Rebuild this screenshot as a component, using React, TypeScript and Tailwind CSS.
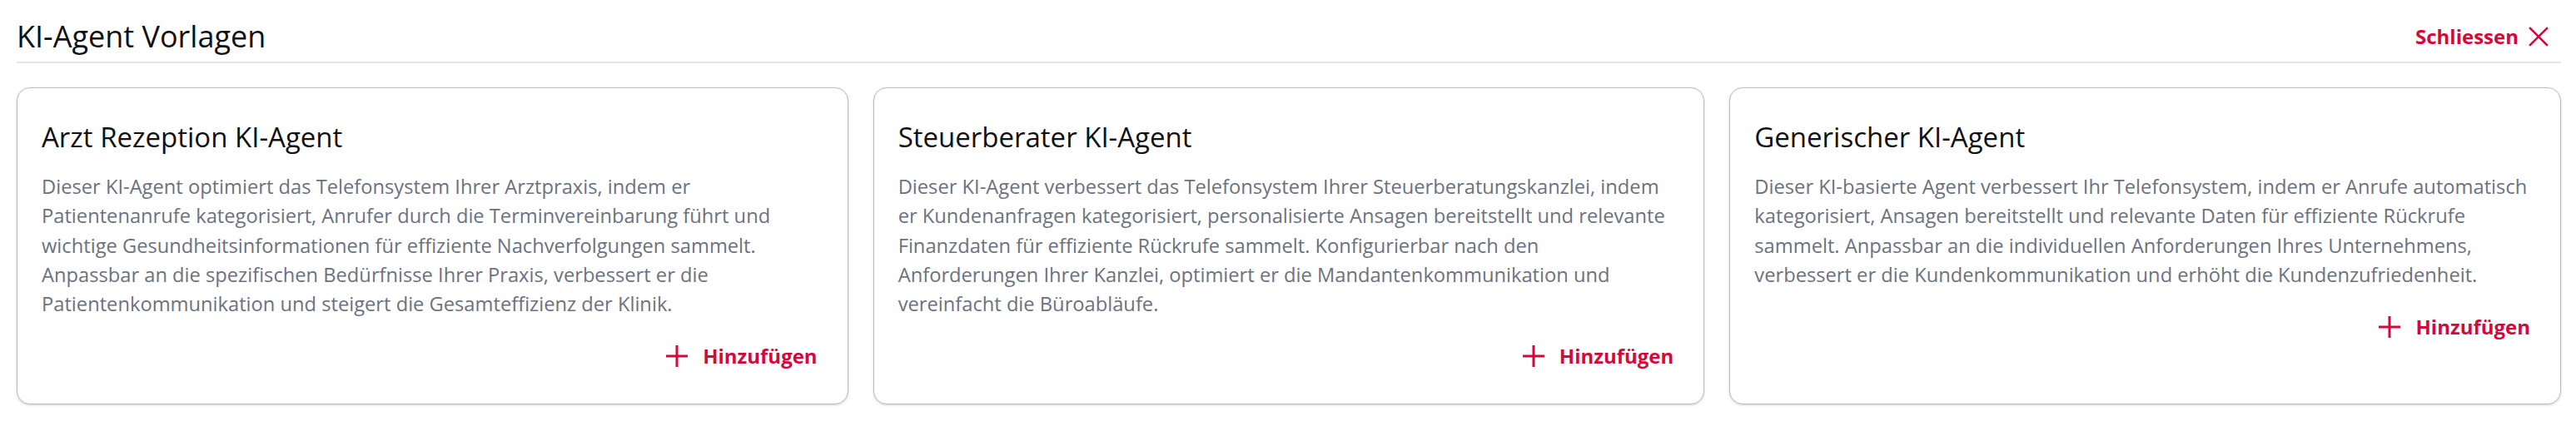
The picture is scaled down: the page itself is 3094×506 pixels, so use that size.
import React from 'react';

interface Template {
  title: string;
  description: string;
}

const templates: Template[] = [
  {
    title: 'Arzt Rezeption KI-Agent',
    description:
      'Dieser KI-Agent optimiert das Telefonsystem Ihrer Arztpraxis, indem er Patientenanrufe kategorisiert, Anrufer durch die Terminvereinbarung führt und wichtige Gesundheitsinformationen für effiziente Nachverfolgungen sammelt. Anpassbar an die spezifischen Bedürfnisse Ihrer Praxis, verbessert er die Patientenkommunikation und steigert die Gesamteffizienz der Klinik.',
  },
  {
    title: 'Steuerberater KI-Agent',
    description:
      'Dieser KI-Agent verbessert das Telefonsystem Ihrer Steuerberatungskanzlei, indem er Kundenanfragen kategorisiert, personalisierte Ansagen bereitstellt und relevante Finanzdaten für effiziente Rückrufe sammelt. Konfigurierbar nach den Anforderungen Ihrer Kanzlei, optimiert er die Mandantenkommunikation und vereinfacht die Büroabläufe.',
  },
  {
    title: 'Generischer KI-Agent',
    description:
      'Dieser KI-basierte Agent verbessert Ihr Telefonsystem, indem er Anrufe automatisch kategorisiert, Ansagen bereitstellt und relevante Daten für effiziente Rückrufe sammelt. Anpassbar an die individuellen Anforderungen Ihres Unternehmens, verbessert er die Kundenkommunikation und erhöht die Kundenzufriedenheit.',
  },
];

const PlusIcon = () => (
  <svg width="26" height="26" viewBox="0 0 26 26" fill="none" stroke="currentColor" strokeWidth={3}>
    <path d="M13 0v26M0 13h26" />
  </svg>
);

const CloseIcon = () => (
  <svg width="24" height="24" viewBox="0 0 24 24" fill="none" stroke="currentColor" strokeWidth={2.6} strokeLinecap="square">
    <path d="M2 2l20 20M22 2L2 22" />
  </svg>
);

const TemplateCard: React.FC<{ template: Template }> = ({ template }) => (
  <div className="flex flex-col rounded-2xl border border-[#bdbdbd] bg-white pl-[29px] pr-[35px] pt-[36px] pb-[39px] shadow-[0_1px_3px_rgba(0,0,0,0.18)]">
    <h2 className="text-[33px] leading-[45px] text-[#111]">{template.title}</h2>
    <p className="mt-[20px] text-[23.7px] leading-[35.3px] text-[#6b7280]">{template.description}</p>
    <div className="mt-[27px] flex justify-end pr-[1px]">
      <button className="flex items-center gap-[18px] text-[#d3093b]">
        <PlusIcon />
        <span className="text-[24px] font-bold leading-[36px]">Hinzufügen</span>
      </button>
    </div>
  </div>
);

export default function App() {
  return (
    <div className="min-h-screen bg-white pl-5 pr-[18px] pt-[18px] font-['Open_Sans',sans-serif]">
      <div className="flex items-center justify-between border-b-2 border-[#e4e4e4] pb-[5px]">
        <h1 className="text-[36px] leading-[51px] text-[#111]">KI-Agent Vorlagen</h1>
        <button className="mr-[15px] flex items-center gap-[12px] text-[#d3093b]">
          <span className="text-[24px] font-bold leading-[36px]">Schliessen</span>
          <CloseIcon />
        </button>
      </div>
      <div className="mt-[29px] grid grid-cols-3 gap-[30px]">
        {templates.map((t) => (
          <TemplateCard key={t.title} template={t} />
        ))}
      </div>
    </div>
  );
}
